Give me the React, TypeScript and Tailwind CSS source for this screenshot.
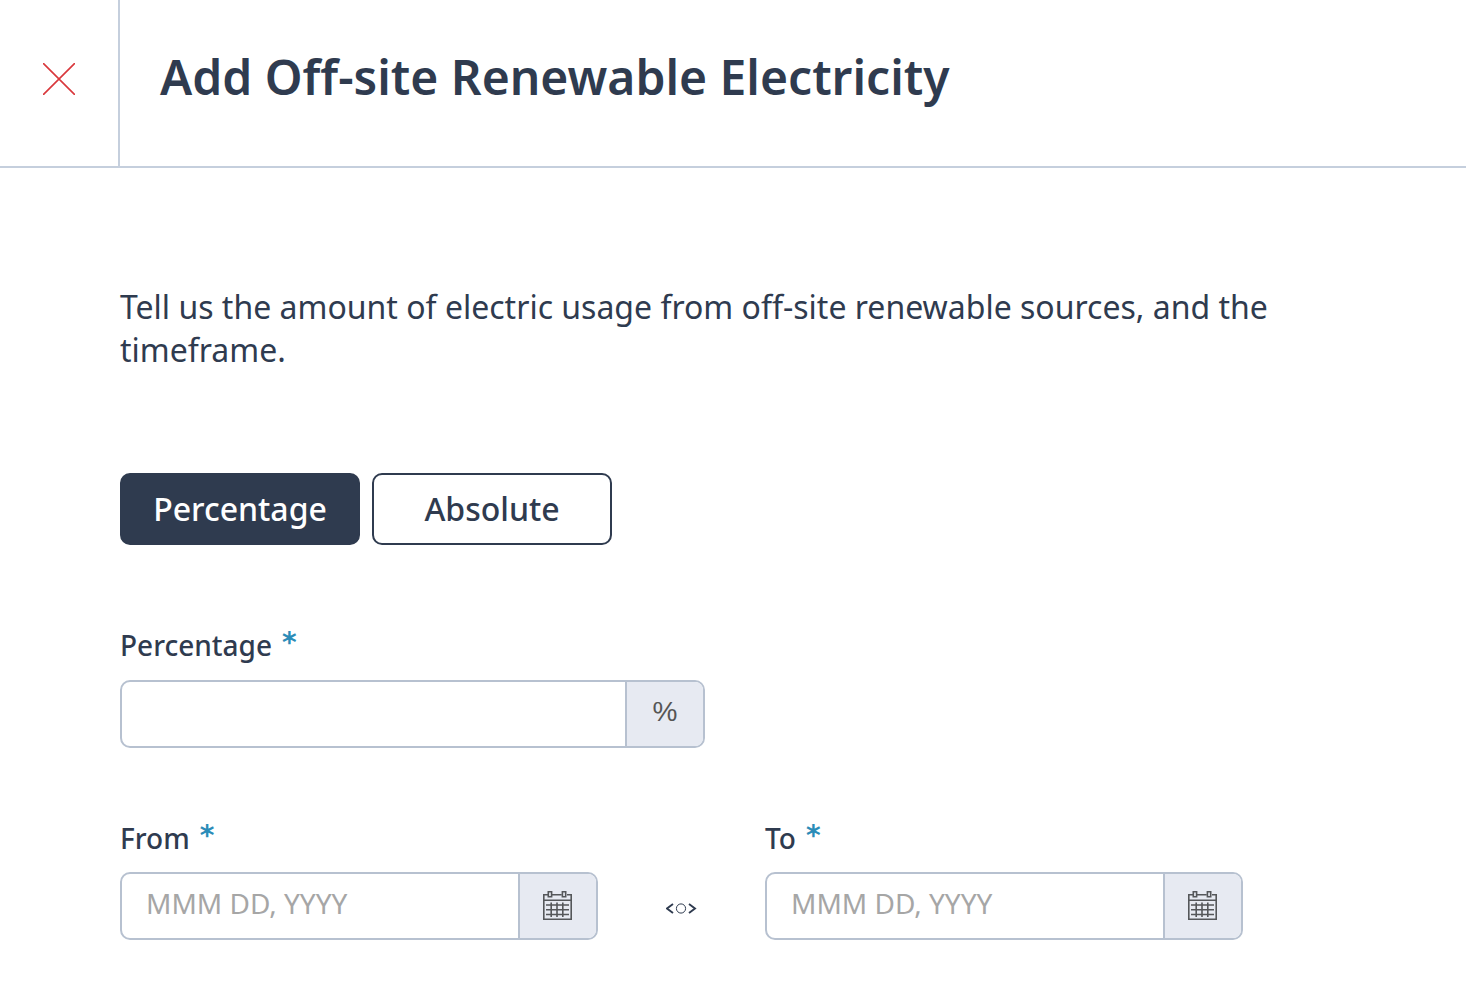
import { useState } from "react"

const CalendarIcon = () => (
	<svg width="29" height="29" viewBox="0 0 29 29" fill="none" stroke="#55575a" strokeWidth="1.6" aria-hidden="true">
		<path d="M5 3.7H0.8V28.2H28.2V3.7H24M8.8 3.7H18.7M0.8 9.3H28.2" />
		<path d="M5.3 0.8H8.6V5.8H5.3ZM19.4 0.8H22.7V5.8H19.4Z" />
		<path d="M3 14H26M3 18.8H26M3 23.5H26M8.2 11.5V26M14 11.5V26M19.8 11.5V26" />
	</svg>
)

const SwapIcon = () => (
	<svg width="32" height="14" viewBox="0 0 32 14" fill="none" stroke="#2f3b4f" aria-hidden="true">
		<path d="M7 2L1 6.5L7 11M23 2L29 6.5L23 11" strokeWidth="1.9" />
		<circle cx="15" cy="6.5" r="4.6" strokeWidth="1" />
	</svg>
)

function FieldLabel({ htmlFor, text }: { htmlFor: string; text: string }) {
	return (
		<label htmlFor={htmlFor} className="flex h-10 items-start gap-2.5 text-[28px] leading-10 font-medium">
			{text}
			<span className="font-['DejaVu_Sans',sans-serif] leading-9 font-bold text-[#2b8cb8]">*</span>
		</label>
	)
}

function DateField({ id, label }: { id: string; label: string }) {
	return (
		<div className="w-full max-w-[478px]">
			<FieldLabel htmlFor={id} text={label} />
			<div className="mt-3.5 flex h-17 overflow-hidden rounded-[10px] border-2 border-[#b7c1d0]">
				<input
					id={id}
					type="text"
					placeholder="MMM DD, YYYY"
					className="min-w-0 flex-1 px-6 pb-1.5 text-[28px] outline-none placeholder:text-[#a6a6a6]"
				/>
				<button
					type="button"
					aria-label={`Open calendar: ${label}`}
					className="flex w-[78px] items-center justify-center border-l-2 border-[#b7c1d0] bg-[#e7eaf2] pr-px pb-0.5"
				>
					<CalendarIcon />
				</button>
			</div>
		</div>
	)
}

const modes = ["Percentage", "Absolute"]

export default function App() {
	const [mode, setMode] = useState("Percentage")

	return (
		<div className="min-h-screen bg-white font-['Noto_Sans',sans-serif] text-[#2f3b4f]">
			<header className="flex h-42 border-b-2 border-[#c5cfdd]">
				<button
					type="button"
					aria-label="Close"
					className="flex w-30 shrink-0 items-center justify-center border-r-2 border-[#c5cfdd] pb-2"
				>
					<svg width="32" height="32" viewBox="0 0 32 32" stroke="#d9383c" strokeWidth="1.6" aria-hidden="true">
						<path d="M0 0L32 32M32 0L0 32" />
					</svg>
				</button>
				<h1 className="flex items-center px-10 pb-3 text-[48px] font-semibold">
					Add Off-site Renewable Electricity
				</h1>
			</header>

			<main className="px-30 pt-[117px] pb-13">
				<p className="text-[32px] leading-[43px]">
					Tell us the amount of electric usage from off-site renewable sources, and the timeframe.
				</p>

				<div className="mt-[102px] flex gap-3">
					{modes.map((m) => (
						<button
							key={m}
							type="button"
							aria-pressed={mode === m}
							onClick={() => setMode(m)}
							className={`h-18 w-60 rounded-[10px] border-2 border-[#2f3b4f] text-[32px] leading-10 font-medium ${
								mode === m ? "bg-[#2f3b4f] text-white" : "bg-white"
							}`}
						>
							{m}
						</button>
					))}
				</div>

				<div className="mt-20 max-w-[585px]">
					<FieldLabel htmlFor="amount" text="Percentage" />
					<div className="mt-[15px] flex h-17 overflow-hidden rounded-[10px] border-2 border-[#b7c1d0]">
						<input id="amount" type="text" className="min-w-0 flex-1 px-6 text-[28px] outline-none" />
						<span className="flex w-[78px] items-center justify-center border-l-2 border-[#b7c1d0] bg-[#e7eaf2] pb-1 font-['Liberation_Sans',sans-serif] text-[28px] text-[#555]">
							%
						</span>
					</div>
				</div>

				<div className="mt-[70px] flex items-end">
					<DateField id="from" label="From" />
					<div className="flex h-[62px] w-[167px] shrink-0 items-start justify-center pt-6">
						<SwapIcon />
					</div>
					<DateField id="to" label="To" />
				</div>
			</main>
		</div>
	)
}
